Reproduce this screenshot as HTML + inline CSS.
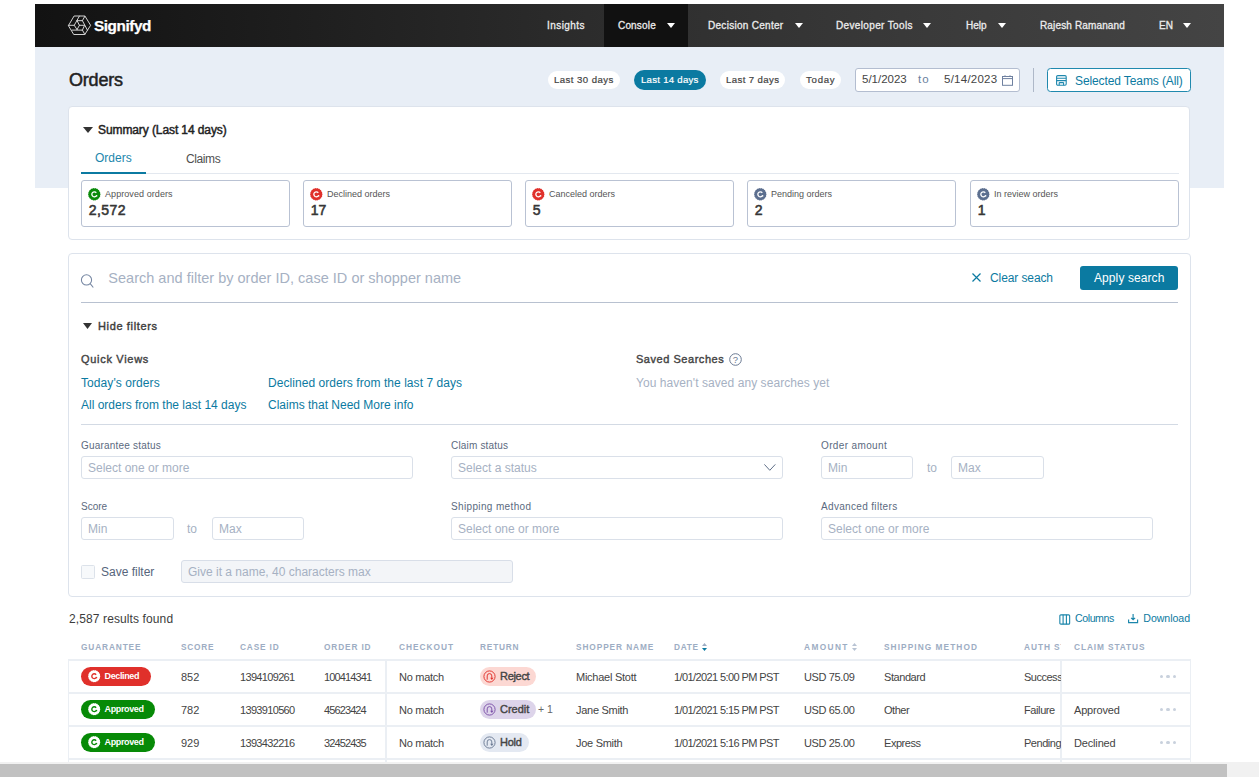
<!DOCTYPE html><html><head><meta charset="utf-8"><style>
html,body{margin:0;padding:0;width:1259px;height:777px;overflow:hidden;background:#fff;position:relative;font-family:"Liberation Sans",sans-serif;}
.a{position:absolute;box-sizing:border-box;}
.t{position:absolute;white-space:pre;}
svg{position:absolute;overflow:visible;}
</style></head><body>
<div class="a" style="left:35px;top:4px;width:1189px;height:43px;background:linear-gradient(90deg,#121212 0%,#1d1d1d 20%,#2e2e2e 50%,#3a3a3a 75%,#444 100%);"></div>
<div class="a" style="left:604px;top:4px;width:84px;height:43px;background:#111;"></div>
<div class="a" style="left:35px;top:47px;width:1189px;height:141px;background:#e8eef6;"></div>
<svg style="left:67px;top:14px" width="25" height="23" viewBox="0 0 25 23"><g fill="none" stroke="#dcdcdc" stroke-width="0.95" stroke-linejoin="round" stroke-linecap="round">
<path d="M1.6 11.3 L7.1 2 L17.9 2 L23.6 11.3 L17.8 20.5 L7.1 20.5 Z"/>
<path d="M12.4 2.1 L7.25 11.3 L10.06 15.6 M1.6 11.3 H7.25 M10.06 6.66 H15.4 L17.8 2.3 M15.4 6.66 L20.4 16.1 M10.06 6.66 L12.4 11.3 L10.06 15.6 M12.4 11.3 H17.6 L15.4 16.1 M5.0 16.1 H15.4 L17.8 20.4"/>
</g></svg>
<div class="t" style="left:94.00px;top:17.95px;font-size:15.3px;line-height:15.3px;color:#fff;font-weight:bold;letter-spacing:-0.429px;-webkit-text-stroke:0.25px #fff;">Signifyd</div>
<div class="t" style="left:547.00px;top:20.54px;font-size:10px;line-height:10px;color:#ececec;font-weight:normal;letter-spacing:0.429px;-webkit-text-stroke:0.3px #ececec;">Insights</div>
<div class="t" style="left:618.00px;top:20.54px;font-size:10px;line-height:10px;color:#ececec;font-weight:normal;letter-spacing:0.167px;-webkit-text-stroke:0.3px #ececec;">Console</div>
<svg style="left:667px;top:23px" width="8" height="5"><path d="M0 0 L8 0 L4.0 5 Z" fill="#fff"/></svg>
<div class="t" style="left:708.00px;top:20.54px;font-size:10px;line-height:10px;color:#ececec;font-weight:normal;letter-spacing:0.286px;-webkit-text-stroke:0.3px #ececec;">Decision Center</div>
<svg style="left:795px;top:23px" width="8" height="5"><path d="M0 0 L8 0 L4.0 5 Z" fill="#fff"/></svg>
<div class="t" style="left:836.00px;top:20.54px;font-size:10px;line-height:10px;color:#ececec;font-weight:normal;letter-spacing:0.357px;-webkit-text-stroke:0.3px #ececec;">Developer Tools</div>
<svg style="left:923px;top:23px" width="8" height="5"><path d="M0 0 L8 0 L4.0 5 Z" fill="#fff"/></svg>
<div class="t" style="left:966.00px;top:20.54px;font-size:10px;line-height:10px;color:#ececec;font-weight:normal;letter-spacing:0.000px;-webkit-text-stroke:0.3px #ececec;">Help</div>
<svg style="left:998px;top:23px" width="8" height="5"><path d="M0 0 L8 0 L4.0 5 Z" fill="#fff"/></svg>
<div class="t" style="left:1040.00px;top:20.54px;font-size:10px;line-height:10px;color:#ececec;font-weight:normal;letter-spacing:0.143px;-webkit-text-stroke:0.3px #ececec;">Rajesh Ramanand</div>
<div class="t" style="left:1159.00px;top:20.54px;font-size:10px;line-height:10px;color:#ececec;font-weight:normal;letter-spacing:0.000px;-webkit-text-stroke:0.3px #ececec;">EN</div>
<svg style="left:1183px;top:23px" width="8" height="5"><path d="M0 0 L8 0 L4.0 5 Z" fill="#fff"/></svg>
<div class="t" style="left:69.00px;top:70.76px;font-size:18px;line-height:18px;color:#222;font-weight:normal;letter-spacing:-0.200px;-webkit-text-stroke:0.5px #222;">Orders</div>
<div class="a" style="left:548px;top:71px;width:72px;height:18px;background:#fff;border-radius:10px;"></div>
<div class="t" style="left:554.00px;top:74.87px;font-size:9.6px;line-height:9.6px;color:#444;font-weight:normal;letter-spacing:0.455px;-webkit-text-stroke:0.2px #444;">Last 30 days</div>
<div class="a" style="left:634px;top:70px;width:72px;height:20px;background:#0b7aa1;border-radius:10px;"></div>
<div class="t" style="left:641.00px;top:74.87px;font-size:9.6px;line-height:9.6px;color:#fff;font-weight:normal;letter-spacing:0.273px;-webkit-text-stroke:0.2px #fff;">Last 14 days</div>
<div class="a" style="left:720px;top:71px;width:65px;height:18px;background:#fff;border-radius:10px;"></div>
<div class="t" style="left:726.00px;top:74.87px;font-size:9.6px;line-height:9.6px;color:#444;font-weight:normal;letter-spacing:0.400px;-webkit-text-stroke:0.2px #444;">Last 7 days</div>
<div class="a" style="left:800px;top:71px;width:41px;height:18px;background:#fff;border-radius:10px;"></div>
<div class="t" style="left:806.00px;top:74.87px;font-size:9.6px;line-height:9.6px;color:#444;font-weight:normal;letter-spacing:0.750px;-webkit-text-stroke:0.2px #444;">Today</div>
<div class="a" style="left:855px;top:68px;width:165px;height:24px;background:#fff;border:1px solid #b3bdd0;border-radius:3px;"></div>
<div class="t" style="left:862.00px;top:74.27px;font-size:11.5px;line-height:11.5px;color:#444;font-weight:normal;letter-spacing:0.000px;">5/1/2023</div>
<div class="t" style="left:918.00px;top:74.27px;font-size:11.5px;line-height:11.5px;color:#6a7fa0;font-weight:normal;letter-spacing:1.000px;">to</div>
<div class="t" style="left:944.00px;top:74.27px;font-size:11.5px;line-height:11.5px;color:#444;font-weight:normal;letter-spacing:0.250px;">5/14/2023</div>
<svg style="left:1001.5px;top:74.5px" width="11" height="11" viewBox="0 0 11 11"><g fill="none" stroke="#6f81a0" stroke-width="1"><rect x="0.5" y="1.5" width="10" height="8.8"/><path d="M0.5 3.6 H10.5 M3 0.3 V2 M8 0.3 V2"/></g></svg>
<div class="a" style="left:1033px;top:68px;width:1px;height:24px;background:#aeb8c8;"></div>
<div class="a" style="left:1047px;top:68px;width:144px;height:24px;background:#fff;border:1.2px solid #2089ae;border-radius:3.5px;"></div>
<svg style="left:1055.5px;top:74.5px" width="11" height="11" viewBox="0 0 11 11"><g fill="none" stroke="#1f88ae" stroke-width="1.1"><rect x="0.6" y="0.6" width="9.6" height="9.6" rx="1.2"/><path d="M0.6 3.2 H10.2 M0.6 5.6 H10.2 M3.2 7.6 H7.6 M3.2 7.6 V10.2 M7.6 7.6 V10.2"/></g></svg>
<div class="t" style="left:1075.00px;top:74.84px;font-size:12px;line-height:12px;color:#0b7aa1;font-weight:normal;letter-spacing:-0.105px;">Selected Teams (All)</div>
<div class="a" style="left:68px;top:106px;width:1122px;height:134px;background:#fff;border:1px solid #dde3ec;border-radius:4px;"></div>
<svg style="left:83px;top:127px" width="10" height="6"><path d="M0 0 L10 0 L5 6 Z" fill="#333"/></svg>
<div class="t" style="left:98.00px;top:123.84px;font-size:12px;line-height:12px;color:#222;font-weight:normal;letter-spacing:-0.095px;-webkit-text-stroke:0.45px #222;">Summary (Last 14 days)</div>
<div class="t" style="left:95.00px;top:152.24px;font-size:12px;line-height:12px;color:#1c87ad;font-weight:normal;letter-spacing:0.000px;">Orders</div>
<div class="t" style="left:186.00px;top:152.84px;font-size:12px;line-height:12px;color:#505050;font-weight:normal;letter-spacing:-0.400px;">Claims</div>
<div class="a" style="left:81px;top:173px;width:1098px;height:1px;background:#e3e8ef;"></div>
<div class="a" style="left:81px;top:172px;width:65px;height:2px;background:#0b7aa1;"></div>
<div class="a" style="left:81px;top:180px;width:209px;height:47px;background:#fff;border:1px solid #b9c2d3;border-radius:3px;"></div>
<svg style="left:87.10000000000001px;top:186.7px" width="14.6" height="14.6" viewBox="-7.3 -7.3 14.6 14.6"><path d="M6.30,0.00 L5.76,1.02 L5.92,2.15 L5.07,2.92 L4.83,4.05 L3.76,4.48 L3.15,5.46 L2.00,5.50 L1.09,6.20 L0.00,5.85 L-1.09,6.20 L-2.00,5.50 L-3.15,5.46 L-3.76,4.48 L-4.83,4.05 L-5.07,2.93 L-5.92,2.15 L-5.76,1.02 L-6.30,0.00 L-5.76,-1.02 L-5.92,-2.15 L-5.07,-2.93 L-4.83,-4.05 L-3.76,-4.48 L-3.15,-5.46 L-2.00,-5.50 L-1.09,-6.20 L-0.00,-5.85 L1.09,-6.20 L2.00,-5.50 L3.15,-5.46 L3.76,-4.48 L4.83,-4.05 L5.07,-2.92 L5.92,-2.15 L5.76,-1.02Z" fill="#0a8a0a"/><path d="M2.00 -1.55 A2.5 2.5 0 1 0 2.38 0.88 L2.38 2.25" fill="none" stroke="#fff" stroke-width="1.3"/></svg>
<div class="t" style="left:105.00px;top:189.68px;font-size:9px;line-height:9px;color:#555;font-weight:normal;letter-spacing:0.071px;">Approved orders</div>
<div class="t" style="left:88.80px;top:203.15px;font-size:14px;line-height:14px;color:#363636;font-weight:normal;letter-spacing:0.450px;-webkit-text-stroke:0.55px #363636;">2,572</div>
<div class="a" style="left:303px;top:180px;width:209px;height:47px;background:#fff;border:1px solid #b9c2d3;border-radius:3px;"></div>
<svg style="left:309.09999999999997px;top:186.7px" width="14.6" height="14.6" viewBox="-7.3 -7.3 14.6 14.6"><path d="M6.30,0.00 L5.76,1.02 L5.92,2.15 L5.07,2.92 L4.83,4.05 L3.76,4.48 L3.15,5.46 L2.00,5.50 L1.09,6.20 L0.00,5.85 L-1.09,6.20 L-2.00,5.50 L-3.15,5.46 L-3.76,4.48 L-4.83,4.05 L-5.07,2.93 L-5.92,2.15 L-5.76,1.02 L-6.30,0.00 L-5.76,-1.02 L-5.92,-2.15 L-5.07,-2.93 L-4.83,-4.05 L-3.76,-4.48 L-3.15,-5.46 L-2.00,-5.50 L-1.09,-6.20 L-0.00,-5.85 L1.09,-6.20 L2.00,-5.50 L3.15,-5.46 L3.76,-4.48 L4.83,-4.05 L5.07,-2.92 L5.92,-2.15 L5.76,-1.02Z" fill="#e0302b"/><path d="M2.00 -1.55 A2.5 2.5 0 1 0 2.38 0.88 L2.38 2.25" fill="none" stroke="#fff" stroke-width="1.3"/></svg>
<div class="t" style="left:327.00px;top:189.68px;font-size:9px;line-height:9px;color:#555;font-weight:normal;letter-spacing:0.000px;">Declined orders</div>
<div class="t" style="left:310.80px;top:203.15px;font-size:14px;line-height:14px;color:#363636;font-weight:normal;letter-spacing:0.000px;-webkit-text-stroke:0.55px #363636;">17</div>
<div class="a" style="left:525px;top:180px;width:209px;height:47px;background:#fff;border:1px solid #b9c2d3;border-radius:3px;"></div>
<svg style="left:531.1px;top:186.7px" width="14.6" height="14.6" viewBox="-7.3 -7.3 14.6 14.6"><path d="M6.30,0.00 L5.76,1.02 L5.92,2.15 L5.07,2.92 L4.83,4.05 L3.76,4.48 L3.15,5.46 L2.00,5.50 L1.09,6.20 L0.00,5.85 L-1.09,6.20 L-2.00,5.50 L-3.15,5.46 L-3.76,4.48 L-4.83,4.05 L-5.07,2.93 L-5.92,2.15 L-5.76,1.02 L-6.30,0.00 L-5.76,-1.02 L-5.92,-2.15 L-5.07,-2.93 L-4.83,-4.05 L-3.76,-4.48 L-3.15,-5.46 L-2.00,-5.50 L-1.09,-6.20 L-0.00,-5.85 L1.09,-6.20 L2.00,-5.50 L3.15,-5.46 L3.76,-4.48 L4.83,-4.05 L5.07,-2.92 L5.92,-2.15 L5.76,-1.02Z" fill="#e0302b"/><path d="M2.00 -1.55 A2.5 2.5 0 1 0 2.38 0.88 L2.38 2.25" fill="none" stroke="#fff" stroke-width="1.3"/></svg>
<div class="t" style="left:549.00px;top:189.68px;font-size:9px;line-height:9px;color:#555;font-weight:normal;letter-spacing:0.000px;">Canceled orders</div>
<div class="t" style="left:532.80px;top:203.15px;font-size:14px;line-height:14px;color:#363636;font-weight:normal;letter-spacing:0.000px;-webkit-text-stroke:0.55px #363636;">5</div>
<div class="a" style="left:747px;top:180px;width:209px;height:47px;background:#fff;border:1px solid #b9c2d3;border-radius:3px;"></div>
<svg style="left:753.1px;top:186.7px" width="14.6" height="14.6" viewBox="-7.3 -7.3 14.6 14.6"><path d="M6.30,0.00 L5.76,1.02 L5.92,2.15 L5.07,2.92 L4.83,4.05 L3.76,4.48 L3.15,5.46 L2.00,5.50 L1.09,6.20 L0.00,5.85 L-1.09,6.20 L-2.00,5.50 L-3.15,5.46 L-3.76,4.48 L-4.83,4.05 L-5.07,2.93 L-5.92,2.15 L-5.76,1.02 L-6.30,0.00 L-5.76,-1.02 L-5.92,-2.15 L-5.07,-2.93 L-4.83,-4.05 L-3.76,-4.48 L-3.15,-5.46 L-2.00,-5.50 L-1.09,-6.20 L-0.00,-5.85 L1.09,-6.20 L2.00,-5.50 L3.15,-5.46 L3.76,-4.48 L4.83,-4.05 L5.07,-2.92 L5.92,-2.15 L5.76,-1.02Z" fill="#5c6f8f"/><path d="M2.00 -1.55 A2.5 2.5 0 1 0 2.38 0.88 L2.38 2.25" fill="none" stroke="#fff" stroke-width="1.3"/></svg>
<div class="t" style="left:771.00px;top:189.68px;font-size:9px;line-height:9px;color:#555;font-weight:normal;letter-spacing:0.000px;">Pending orders</div>
<div class="t" style="left:754.80px;top:203.15px;font-size:14px;line-height:14px;color:#363636;font-weight:normal;letter-spacing:0.000px;-webkit-text-stroke:0.55px #363636;">2</div>
<div class="a" style="left:970px;top:180px;width:209px;height:47px;background:#fff;border:1px solid #b9c2d3;border-radius:3px;"></div>
<svg style="left:976.1px;top:186.7px" width="14.6" height="14.6" viewBox="-7.3 -7.3 14.6 14.6"><path d="M6.30,0.00 L5.76,1.02 L5.92,2.15 L5.07,2.92 L4.83,4.05 L3.76,4.48 L3.15,5.46 L2.00,5.50 L1.09,6.20 L0.00,5.85 L-1.09,6.20 L-2.00,5.50 L-3.15,5.46 L-3.76,4.48 L-4.83,4.05 L-5.07,2.93 L-5.92,2.15 L-5.76,1.02 L-6.30,0.00 L-5.76,-1.02 L-5.92,-2.15 L-5.07,-2.93 L-4.83,-4.05 L-3.76,-4.48 L-3.15,-5.46 L-2.00,-5.50 L-1.09,-6.20 L-0.00,-5.85 L1.09,-6.20 L2.00,-5.50 L3.15,-5.46 L3.76,-4.48 L4.83,-4.05 L5.07,-2.92 L5.92,-2.15 L5.76,-1.02Z" fill="#5c6f8f"/><path d="M2.00 -1.55 A2.5 2.5 0 1 0 2.38 0.88 L2.38 2.25" fill="none" stroke="#fff" stroke-width="1.3"/></svg>
<div class="t" style="left:994.00px;top:189.68px;font-size:9px;line-height:9px;color:#555;font-weight:normal;letter-spacing:0.000px;">In review orders</div>
<div class="t" style="left:977.80px;top:203.15px;font-size:14px;line-height:14px;color:#363636;font-weight:normal;letter-spacing:0.000px;-webkit-text-stroke:0.55px #363636;">1</div>
<div class="a" style="left:68px;top:253px;width:1123px;height:344px;background:#fff;border:1px solid #dde3ec;border-radius:4px;"></div>
<svg style="left:80px;top:274px" width="15" height="15" viewBox="0 0 15 15"><g fill="none" stroke="#7586a2" stroke-width="1.05"><circle cx="6.5" cy="5.9" r="5.1"/><path d="M10.2 9.6 L13.3 13.5"/></g></svg>
<div class="t" style="left:108.30px;top:270.73px;font-size:14.5px;line-height:14.5px;color:#a6b1c3;font-weight:normal;letter-spacing:0.013px;">Search and filter by order ID, case ID or shopper name</div>
<svg style="left:972px;top:273px" width="9" height="9"><path d="M0.5 0.5 L8.5 8.5 M8.5 0.5 L0.5 8.5" stroke="#0b7aa1" stroke-width="1.2"/></svg>
<div class="t" style="left:990.00px;top:271.84px;font-size:12px;line-height:12px;color:#0b7aa1;font-weight:normal;letter-spacing:-0.100px;">Clear seach</div>
<div class="a" style="left:1080px;top:266px;width:98px;height:23.5px;background:#0b7aa1;border-radius:3px;"></div>
<div class="t" style="left:1094.00px;top:271.84px;font-size:12px;line-height:12px;color:#fff;font-weight:normal;letter-spacing:0.091px;">Apply search</div>
<div class="a" style="left:81px;top:302px;width:1097px;height:1px;background:#b8c1d0;"></div>
<svg style="left:83px;top:323px" width="9" height="6"><path d="M0 0 L9 0 L4.5 6 Z" fill="#333"/></svg>
<div class="t" style="left:98.00px;top:320.69px;font-size:11px;line-height:11px;color:#3d3d3d;font-weight:normal;letter-spacing:0.636px;-webkit-text-stroke:0.4px #3d3d3d;">Hide filters</div>
<div class="t" style="left:81.00px;top:353.69px;font-size:11px;line-height:11px;color:#444;font-weight:normal;letter-spacing:0.700px;-webkit-text-stroke:0.4px #444;">Quick Views</div>
<div class="t" style="left:81.00px;top:376.84px;font-size:12px;line-height:12px;color:#0b7aa1;font-weight:normal;letter-spacing:0.077px;">Today's orders</div>
<div class="t" style="left:81.00px;top:398.84px;font-size:12px;line-height:12px;color:#0b7aa1;font-weight:normal;letter-spacing:0.000px;">All orders from the last 14 days</div>
<div class="t" style="left:268.00px;top:376.84px;font-size:12px;line-height:12px;color:#0b7aa1;font-weight:normal;letter-spacing:0.057px;">Declined orders from the last 7 days</div>
<div class="t" style="left:268.00px;top:398.84px;font-size:12px;line-height:12px;color:#0b7aa1;font-weight:normal;letter-spacing:0.000px;">Claims that Need More info</div>
<div class="t" style="left:636.00px;top:353.69px;font-size:11px;line-height:11px;color:#444;font-weight:normal;letter-spacing:0.538px;-webkit-text-stroke:0.4px #444;">Saved Searches</div>
<svg style="left:729px;top:353px" width="13" height="13" viewBox="0 0 13 13"><circle cx="6.5" cy="6.5" r="5.8" fill="none" stroke="#6b7a93" stroke-width="1"/><text x="6.5" y="9.9" text-anchor="middle" font-size="9.5" fill="#6b7a93" font-family="Liberation Sans">?</text></svg>
<div class="t" style="left:636.00px;top:376.84px;font-size:12px;line-height:12px;color:#a6b1c3;font-weight:normal;letter-spacing:0.061px;">You haven't saved any searches yet</div>
<div class="a" style="left:81px;top:424px;width:1097px;height:1px;background:#d3dae4;"></div>
<div class="t" style="left:81.00px;top:440.54px;font-size:10px;line-height:10px;color:#5b6a80;font-weight:normal;letter-spacing:0.200px;">Guarantee status</div>
<div class="a" style="left:81px;top:456px;width:332px;height:23px;background:#fff;border:1px solid #dae0e9;border-radius:3px;"></div>
<div class="t" style="left:88.00px;top:462.04px;font-size:12px;line-height:12px;color:#a6b1c3;font-weight:normal;letter-spacing:0.000px;">Select one or more</div>
<div class="t" style="left:451.00px;top:440.54px;font-size:10px;line-height:10px;color:#5b6a80;font-weight:normal;letter-spacing:0.182px;">Claim status</div>
<div class="a" style="left:451px;top:456px;width:332px;height:23px;background:#fff;border:1px solid #dae0e9;border-radius:3px;"></div>
<div class="t" style="left:458.00px;top:462.04px;font-size:12px;line-height:12px;color:#a6b1c3;font-weight:normal;letter-spacing:0.000px;">Select a status</div>
<svg style="left:764px;top:464px" width="12" height="7"><path d="M0.4 0.4 L5.8 6.3 L11.3 0.4" fill="none" stroke="#5f6f88" stroke-width="1"/></svg>
<div class="t" style="left:821.00px;top:440.54px;font-size:10px;line-height:10px;color:#5b6a80;font-weight:normal;letter-spacing:0.364px;">Order amount</div>
<div class="a" style="left:821px;top:456px;width:92px;height:23px;background:#fff;border:1px solid #dae0e9;border-radius:3px;"></div>
<div class="t" style="left:828.00px;top:462.04px;font-size:12px;line-height:12px;color:#a6b1c3;font-weight:normal;letter-spacing:0.000px;">Min</div>
<div class="t" style="left:927.00px;top:461.84px;font-size:12px;line-height:12px;color:#a6b1c3;font-weight:normal;letter-spacing:0.000px;">to</div>
<div class="a" style="left:951px;top:456px;width:93px;height:23px;background:#fff;border:1px solid #dae0e9;border-radius:3px;"></div>
<div class="t" style="left:958.00px;top:462.04px;font-size:12px;line-height:12px;color:#a6b1c3;font-weight:normal;letter-spacing:0.000px;">Max</div>
<div class="t" style="left:81.00px;top:501.54px;font-size:10px;line-height:10px;color:#5b6a80;font-weight:normal;letter-spacing:0.000px;">Score</div>
<div class="a" style="left:81px;top:517px;width:93px;height:23px;background:#fff;border:1px solid #dae0e9;border-radius:3px;"></div>
<div class="t" style="left:88.00px;top:523.04px;font-size:12px;line-height:12px;color:#a6b1c3;font-weight:normal;letter-spacing:0.000px;">Min</div>
<div class="t" style="left:187.00px;top:522.84px;font-size:12px;line-height:12px;color:#a6b1c3;font-weight:normal;letter-spacing:0.000px;">to</div>
<div class="a" style="left:212px;top:517px;width:92px;height:23px;background:#fff;border:1px solid #dae0e9;border-radius:3px;"></div>
<div class="t" style="left:219.00px;top:523.04px;font-size:12px;line-height:12px;color:#a6b1c3;font-weight:normal;letter-spacing:0.000px;">Max</div>
<div class="t" style="left:451.00px;top:501.54px;font-size:10px;line-height:10px;color:#5b6a80;font-weight:normal;letter-spacing:0.357px;">Shipping method</div>
<div class="a" style="left:451px;top:517px;width:332px;height:23px;background:#fff;border:1px solid #dae0e9;border-radius:3px;"></div>
<div class="t" style="left:458.00px;top:523.04px;font-size:12px;line-height:12px;color:#a6b1c3;font-weight:normal;letter-spacing:0.000px;">Select one or more</div>
<div class="t" style="left:821.00px;top:501.54px;font-size:10px;line-height:10px;color:#5b6a80;font-weight:normal;letter-spacing:0.333px;">Advanced filters</div>
<div class="a" style="left:821px;top:517px;width:332px;height:23px;background:#fff;border:1px solid #dae0e9;border-radius:3px;"></div>
<div class="t" style="left:828.00px;top:523.04px;font-size:12px;line-height:12px;color:#a6b1c3;font-weight:normal;letter-spacing:0.000px;">Select one or more</div>
<div class="a" style="left:81px;top:565px;width:14px;height:14px;background:#f7f9fb;border:1px solid #dce2ea;border-radius:1.5px;"></div>
<div class="t" style="left:101.00px;top:565.84px;font-size:12px;line-height:12px;color:#56657c;font-weight:normal;letter-spacing:0.000px;">Save filter</div>
<div class="a" style="left:181px;top:560px;width:332px;height:23px;background:#f3f5f8;border:1px solid #d8dee8;border-radius:3px;"></div>
<div class="t" style="left:188.00px;top:565.84px;font-size:12px;line-height:12px;color:#a6b1c3;font-weight:normal;letter-spacing:0.000px;">Give it a name, 40 characters max</div>
<div class="t" style="left:69.00px;top:612.84px;font-size:12px;line-height:12px;color:#3c3c3c;font-weight:normal;letter-spacing:0.111px;">2,587 results found</div>
<svg style="left:1059px;top:613.5px" width="12" height="11" viewBox="0 0 12 11"><g fill="none" stroke="#1b86ab" stroke-width="1.1"><rect x="0.85" y="0.85" width="9.8" height="9.3" rx="1"/><path d="M4.1 0.8 V10.2 M7.4 0.8 V10.2"/></g></svg>
<div class="t" style="left:1075.00px;top:613.23px;font-size:10.6px;line-height:10.6px;color:#0b7aa1;font-weight:normal;letter-spacing:-0.417px;">Columns</div>
<svg style="left:1128px;top:614px" width="11" height="10" viewBox="0 0 11 10"><g fill="none" stroke="#1b86ab" stroke-width="1.15"><path d="M5.1 0 V5.6 M3.1 3.8 L5.1 5.8 L7.1 3.8 M0.6 5.6 V8.6 H9.6 V5.6"/></g></svg>
<div class="t" style="left:1143.30px;top:613.23px;font-size:10.6px;line-height:10.6px;color:#0b7aa1;font-weight:normal;letter-spacing:-0.043px;">Download</div>
<div class="t" style="left:81.00px;top:643.17px;font-size:8.3px;line-height:8.3px;color:#9dadc3;font-weight:bold;letter-spacing:0.875px;">GUARANTEE</div>
<div class="t" style="left:181.00px;top:643.17px;font-size:8.3px;line-height:8.3px;color:#9dadc3;font-weight:bold;letter-spacing:0.750px;">SCORE</div>
<div class="t" style="left:240.00px;top:643.17px;font-size:8.3px;line-height:8.3px;color:#9dadc3;font-weight:bold;letter-spacing:0.833px;">CASE ID</div>
<div class="t" style="left:324.00px;top:643.17px;font-size:8.3px;line-height:8.3px;color:#9dadc3;font-weight:bold;letter-spacing:0.857px;">ORDER ID</div>
<div class="t" style="left:399.00px;top:643.17px;font-size:8.3px;line-height:8.3px;color:#9dadc3;font-weight:bold;letter-spacing:1.000px;">CHECKOUT</div>
<div class="t" style="left:480.00px;top:643.17px;font-size:8.3px;line-height:8.3px;color:#9dadc3;font-weight:bold;letter-spacing:0.800px;">RETURN</div>
<div class="t" style="left:576.00px;top:643.17px;font-size:8.3px;line-height:8.3px;color:#9dadc3;font-weight:bold;letter-spacing:0.909px;">SHOPPER NAME</div>
<div class="t" style="left:674.00px;top:643.17px;font-size:8.3px;line-height:8.3px;color:#9dadc3;font-weight:bold;letter-spacing:0.667px;">DATE</div>
<div class="t" style="left:804.00px;top:643.17px;font-size:8.3px;line-height:8.3px;color:#9dadc3;font-weight:bold;letter-spacing:1.400px;">AMOUNT</div>
<div class="t" style="left:884.00px;top:643.17px;font-size:8.3px;line-height:8.3px;color:#9dadc3;font-weight:bold;letter-spacing:1.071px;">SHIPPING METHOD</div>
<div class="t" style="left:1074.00px;top:643.17px;font-size:8.3px;line-height:8.3px;color:#9dadc3;font-weight:bold;letter-spacing:0.909px;">CLAIM STATUS</div>
<div class="a" style="left:0;top:0;width:1061px;height:777px;overflow:hidden"><div class="t" style="left:1024.00px;top:643.17px;font-size:8.3px;line-height:8.3px;color:#9dadc3;font-weight:bold;letter-spacing:0.950px;">AUTH STATUS</div></div>
<svg style="left:702px;top:643px" width="5" height="8"><path d="M0 3 L2.5 0 L5 3 Z" fill="#9dadc3"/><path d="M0 5 L2.5 8 L5 5 Z" fill="#0b7aa1"/></svg>
<svg style="left:852px;top:643px" width="5" height="8"><path d="M0 3 L2.5 0 L5 3 Z" fill="#b8c3d3"/><path d="M0 5 L2.5 8 L5 5 Z" fill="#b8c3d3"/></svg>
<div class="a" style="left:68px;top:659px;width:1123px;height:111px;background:#fff;border:1px solid #ebeff4;border-top:2px solid #ebeff4;border-bottom:none;"></div>
<div class="a" style="left:68px;top:692px;width:1123px;height:2px;background:#ebeff4;"></div>
<div class="a" style="left:68px;top:725px;width:1123px;height:2px;background:#ebeff4;"></div>
<div class="a" style="left:68px;top:758px;width:1123px;height:2px;background:#ebeff4;"></div>
<div class="a" style="left:385px;top:660px;width:2px;height:110px;background:#ebeff4;"></div>
<div class="a" style="left:1060px;top:660px;width:2px;height:110px;background:#ebeff4;"></div>
<div class="a" style="left:81px;top:667px;width:70px;height:19px;background:#e0302b;border-radius:10px;"></div>
<svg style="left:87.2px;top:669.3px" width="14.4" height="14.4" viewBox="-7.2 -7.2 14.4 14.4"><path d="M6.20,0.00 L5.66,1.00 L5.83,2.12 L4.98,2.87 L4.75,3.99 L3.70,4.40 L3.10,5.37 L1.97,5.40 L1.08,6.11 L0.00,5.75 L-1.08,6.11 L-1.97,5.40 L-3.10,5.37 L-3.70,4.40 L-4.75,3.99 L-4.98,2.88 L-5.83,2.12 L-5.66,1.00 L-6.20,0.00 L-5.66,-1.00 L-5.83,-2.12 L-4.98,-2.88 L-4.75,-3.99 L-3.70,-4.40 L-3.10,-5.37 L-1.97,-5.40 L-1.08,-6.11 L-0.00,-5.75 L1.08,-6.11 L1.97,-5.40 L3.10,-5.37 L3.70,-4.40 L4.75,-3.99 L4.98,-2.87 L5.83,-2.12 L5.66,-1.00Z" fill="#fff"/><path d="M1.92 -1.49 A2.4 2.4 0 1 0 2.28 0.84 L2.28 2.16" fill="none" stroke="#e0302b" stroke-width="1.4"/></svg>
<div class="t" style="left:104.50px;top:672.38px;font-size:9px;line-height:9px;color:#fff;font-weight:bold;letter-spacing:-0.357px;">Declined</div>
<div class="t" style="left:181.00px;top:671.69px;font-size:11px;line-height:11px;color:#444;font-weight:normal;letter-spacing:0.000px;">852</div>
<div class="t" style="left:240.00px;top:671.69px;font-size:11px;line-height:11px;color:#444;font-weight:normal;letter-spacing:-0.667px;">1394109261</div>
<div class="t" style="left:324.00px;top:671.69px;font-size:11px;line-height:11px;color:#444;font-weight:normal;letter-spacing:-0.875px;">100414341</div>
<div class="t" style="left:399.00px;top:671.69px;font-size:11px;line-height:11px;color:#444;font-weight:normal;letter-spacing:-0.286px;">No match</div>
<div class="a" style="left:480px;top:667px;width:56px;height:19px;background:#fcd8d3;border-radius:10px;"></div>
<svg style="left:483px;top:670px" width="13" height="13" viewBox="-6.5 -6.5 13 13"><circle r="5.6" fill="none" stroke="#e0302b" stroke-width="0.95"/><path d="M-2.3 3.2 V-0.6 A2.3 2.3 0 0 1 2.3 -0.6 V1.4" fill="none" stroke="#e0302b" stroke-width="0.95"/><path d="M0.6 1.2 H4 L2.3 3.4 Z" fill="#e0302b"/></svg>
<div class="t" style="left:500.00px;top:671.19px;font-size:11px;line-height:11px;color:#444;font-weight:normal;letter-spacing:-0.300px;-webkit-text-stroke:0.4px #444;">Reject</div>
<div class="t" style="left:576.00px;top:671.69px;font-size:11px;line-height:11px;color:#444;font-weight:normal;letter-spacing:-0.250px;">Michael Stott</div>
<div class="t" style="left:674.00px;top:671.69px;font-size:11px;line-height:11px;color:#444;font-weight:normal;letter-spacing:-0.600px;">1/01/2021 5:00 PM PST</div>
<div class="t" style="left:804.00px;top:671.69px;font-size:11px;line-height:11px;color:#444;font-weight:normal;letter-spacing:-0.375px;">USD 75.09</div>
<div class="t" style="left:884.00px;top:671.69px;font-size:11px;line-height:11px;color:#444;font-weight:normal;letter-spacing:-0.429px;">Standard</div>
<div class="a" style="left:0;top:0;width:1061px;height:777px;overflow:hidden"><div class="t" style="left:1024.00px;top:671.69px;font-size:11px;line-height:11px;color:#444;font-weight:normal;letter-spacing:-0.490px;">Success</div></div>
<div class="a" style="left:1159.5px;top:674.9px;width:3.3px;height:3.3px;background:#c9d1dd;border-radius:50%;"></div>
<div class="a" style="left:1166.3px;top:674.9px;width:3.3px;height:3.3px;background:#c9d1dd;border-radius:50%;"></div>
<div class="a" style="left:1173.1px;top:674.9px;width:3.3px;height:3.3px;background:#c9d1dd;border-radius:50%;"></div>
<div class="a" style="left:81px;top:700px;width:74px;height:19px;background:#078a07;border-radius:10px;"></div>
<svg style="left:87.2px;top:702.3px" width="14.4" height="14.4" viewBox="-7.2 -7.2 14.4 14.4"><path d="M6.20,0.00 L5.66,1.00 L5.83,2.12 L4.98,2.87 L4.75,3.99 L3.70,4.40 L3.10,5.37 L1.97,5.40 L1.08,6.11 L0.00,5.75 L-1.08,6.11 L-1.97,5.40 L-3.10,5.37 L-3.70,4.40 L-4.75,3.99 L-4.98,2.88 L-5.83,2.12 L-5.66,1.00 L-6.20,0.00 L-5.66,-1.00 L-5.83,-2.12 L-4.98,-2.88 L-4.75,-3.99 L-3.70,-4.40 L-3.10,-5.37 L-1.97,-5.40 L-1.08,-6.11 L-0.00,-5.75 L1.08,-6.11 L1.97,-5.40 L3.10,-5.37 L3.70,-4.40 L4.75,-3.99 L4.98,-2.87 L5.83,-2.12 L5.66,-1.00Z" fill="#fff"/><path d="M1.92 -1.49 A2.4 2.4 0 1 0 2.28 0.84 L2.28 2.16" fill="none" stroke="#078a07" stroke-width="1.4"/></svg>
<div class="t" style="left:104.50px;top:705.38px;font-size:9px;line-height:9px;color:#fff;font-weight:bold;letter-spacing:-0.357px;">Approved</div>
<div class="t" style="left:181.00px;top:704.69px;font-size:11px;line-height:11px;color:#444;font-weight:normal;letter-spacing:0.000px;">782</div>
<div class="t" style="left:240.00px;top:704.69px;font-size:11px;line-height:11px;color:#444;font-weight:normal;letter-spacing:-0.667px;">1393910560</div>
<div class="t" style="left:324.00px;top:704.69px;font-size:11px;line-height:11px;color:#444;font-weight:normal;letter-spacing:-0.891px;">45623424</div>
<div class="t" style="left:399.00px;top:704.69px;font-size:11px;line-height:11px;color:#444;font-weight:normal;letter-spacing:-0.286px;">No match</div>
<div class="a" style="left:480px;top:700px;width:56px;height:19px;background:#ddd4ea;border-radius:10px;"></div>
<svg style="left:483px;top:703px" width="13" height="13" viewBox="-6.5 -6.5 13 13"><circle r="5.6" fill="none" stroke="#7b4fa8" stroke-width="0.95"/><path d="M-2.3 3.2 V-0.6 A2.3 2.3 0 0 1 2.3 -0.6 V1.4" fill="none" stroke="#7b4fa8" stroke-width="0.95"/><path d="M0.6 1.2 H4 L2.3 3.4 Z" fill="#7b4fa8"/></svg>
<div class="t" style="left:500.00px;top:704.19px;font-size:11px;line-height:11px;color:#444;font-weight:normal;letter-spacing:0.000px;-webkit-text-stroke:0.4px #444;">Credit</div>
<div class="t" style="left:538.00px;top:704.11px;font-size:10.5px;line-height:10.5px;color:#666;font-weight:normal;letter-spacing:0.000px;">+ 1</div>
<div class="t" style="left:576.00px;top:704.69px;font-size:11px;line-height:11px;color:#444;font-weight:normal;letter-spacing:-0.286px;">Jane Smith</div>
<div class="t" style="left:674.00px;top:704.69px;font-size:11px;line-height:11px;color:#444;font-weight:normal;letter-spacing:-0.600px;">1/01/2021 5:15 PM PST</div>
<div class="t" style="left:804.00px;top:704.69px;font-size:11px;line-height:11px;color:#444;font-weight:normal;letter-spacing:-0.375px;">USD 65.00</div>
<div class="t" style="left:884.00px;top:704.69px;font-size:11px;line-height:11px;color:#444;font-weight:normal;letter-spacing:-0.467px;">Other</div>
<div class="a" style="left:0;top:0;width:1061px;height:777px;overflow:hidden"><div class="t" style="left:1024.00px;top:704.69px;font-size:11px;line-height:11px;color:#444;font-weight:normal;letter-spacing:-0.397px;">Failure</div></div>
<div class="t" style="left:1074.00px;top:704.69px;font-size:11px;line-height:11px;color:#444;font-weight:normal;letter-spacing:-0.175px;">Approved</div>
<div class="a" style="left:1159.5px;top:707.9px;width:3.3px;height:3.3px;background:#c9d1dd;border-radius:50%;"></div>
<div class="a" style="left:1166.3px;top:707.9px;width:3.3px;height:3.3px;background:#c9d1dd;border-radius:50%;"></div>
<div class="a" style="left:1173.1px;top:707.9px;width:3.3px;height:3.3px;background:#c9d1dd;border-radius:50%;"></div>
<div class="a" style="left:81px;top:733px;width:74px;height:19px;background:#078a07;border-radius:10px;"></div>
<svg style="left:87.2px;top:735.3px" width="14.4" height="14.4" viewBox="-7.2 -7.2 14.4 14.4"><path d="M6.20,0.00 L5.66,1.00 L5.83,2.12 L4.98,2.87 L4.75,3.99 L3.70,4.40 L3.10,5.37 L1.97,5.40 L1.08,6.11 L0.00,5.75 L-1.08,6.11 L-1.97,5.40 L-3.10,5.37 L-3.70,4.40 L-4.75,3.99 L-4.98,2.88 L-5.83,2.12 L-5.66,1.00 L-6.20,0.00 L-5.66,-1.00 L-5.83,-2.12 L-4.98,-2.88 L-4.75,-3.99 L-3.70,-4.40 L-3.10,-5.37 L-1.97,-5.40 L-1.08,-6.11 L-0.00,-5.75 L1.08,-6.11 L1.97,-5.40 L3.10,-5.37 L3.70,-4.40 L4.75,-3.99 L4.98,-2.87 L5.83,-2.12 L5.66,-1.00Z" fill="#fff"/><path d="M1.92 -1.49 A2.4 2.4 0 1 0 2.28 0.84 L2.28 2.16" fill="none" stroke="#078a07" stroke-width="1.4"/></svg>
<div class="t" style="left:104.50px;top:738.38px;font-size:9px;line-height:9px;color:#fff;font-weight:bold;letter-spacing:-0.357px;">Approved</div>
<div class="t" style="left:181.00px;top:737.69px;font-size:11px;line-height:11px;color:#444;font-weight:normal;letter-spacing:0.000px;">929</div>
<div class="t" style="left:240.00px;top:737.69px;font-size:11px;line-height:11px;color:#444;font-weight:normal;letter-spacing:-0.667px;">1393432216</div>
<div class="t" style="left:324.00px;top:737.69px;font-size:11px;line-height:11px;color:#444;font-weight:normal;letter-spacing:-0.891px;">32452435</div>
<div class="t" style="left:399.00px;top:737.69px;font-size:11px;line-height:11px;color:#444;font-weight:normal;letter-spacing:-0.286px;">No match</div>
<div class="a" style="left:480px;top:733px;width:49px;height:19px;background:#e4e9f2;border-radius:10px;"></div>
<svg style="left:483px;top:736px" width="13" height="13" viewBox="-6.5 -6.5 13 13"><circle r="5.6" fill="none" stroke="#6b7a93" stroke-width="0.95"/><path d="M-2.3 3.2 V-0.6 A2.3 2.3 0 0 1 2.3 -0.6 V1.4" fill="none" stroke="#6b7a93" stroke-width="0.95"/><path d="M0.6 1.2 H4 L2.3 3.4 Z" fill="#6b7a93"/></svg>
<div class="t" style="left:500.00px;top:737.19px;font-size:11px;line-height:11px;color:#444;font-weight:normal;letter-spacing:-0.233px;-webkit-text-stroke:0.4px #444;">Hold</div>
<div class="t" style="left:576.00px;top:737.69px;font-size:11px;line-height:11px;color:#444;font-weight:normal;letter-spacing:-0.287px;">Joe Smith</div>
<div class="t" style="left:674.00px;top:737.69px;font-size:11px;line-height:11px;color:#444;font-weight:normal;letter-spacing:-0.600px;">1/01/2021 5:16 PM PST</div>
<div class="t" style="left:804.00px;top:737.69px;font-size:11px;line-height:11px;color:#444;font-weight:normal;letter-spacing:-0.375px;">USD 25.00</div>
<div class="t" style="left:884.00px;top:737.69px;font-size:11px;line-height:11px;color:#444;font-weight:normal;letter-spacing:-0.444px;">Express</div>
<div class="a" style="left:0;top:0;width:1061px;height:777px;overflow:hidden"><div class="t" style="left:1024.00px;top:737.69px;font-size:11px;line-height:11px;color:#444;font-weight:normal;letter-spacing:-0.467px;">Pending</div></div>
<div class="t" style="left:1074.00px;top:737.69px;font-size:11px;line-height:11px;color:#444;font-weight:normal;letter-spacing:-0.160px;">Declined</div>
<div class="a" style="left:1159.5px;top:740.9px;width:3.3px;height:3.3px;background:#c9d1dd;border-radius:50%;"></div>
<div class="a" style="left:1166.3px;top:740.9px;width:3.3px;height:3.3px;background:#c9d1dd;border-radius:50%;"></div>
<div class="a" style="left:1173.1px;top:740.9px;width:3.3px;height:3.3px;background:#c9d1dd;border-radius:50%;"></div>
<div class="a" style="left:0px;top:762px;width:1259px;height:15px;background:#f1f1f1;"></div>
<div class="a" style="left:0px;top:764px;width:1227px;height:13px;background:#c1c1c1;"></div>
</body></html>
